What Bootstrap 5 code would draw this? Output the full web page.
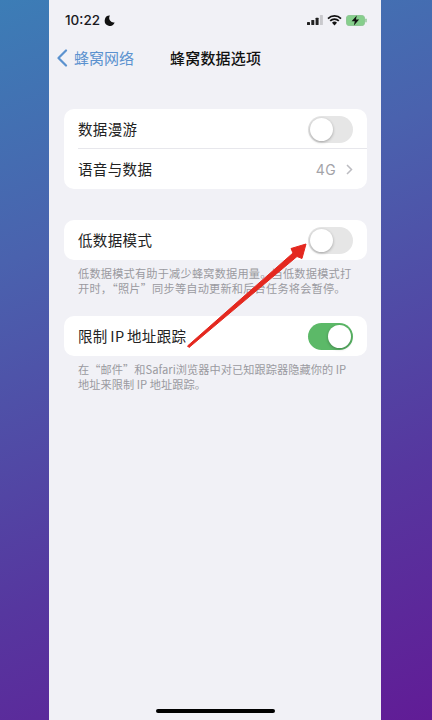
<!DOCTYPE html>
<html lang="zh">
<head>
<meta charset="utf-8">
<title>蜂窝数据选项</title>
<link href="https://cdn.jsdelivr.net/npm/bootstrap@5.3.0/dist/css/bootstrap.min.css" rel="stylesheet">
<style>
html,body{height:720px;overflow:hidden}
body{background:linear-gradient(160deg,#3c7db6 0%,#4a62ae 30%,#56379f 70%,#611c96 100%);font-family:"Noto Sans CJK SC","Liberation Sans",sans-serif;position:relative}
.phone-screen{width:332px;height:720px;margin-left:49px;background:#f1f1f6;padding:0 15px;position:relative}
.status-row{height:40px;padding:0 0 0 2px;margin:0 -1px;font-family:"Inter","Liberation Sans",sans-serif;font-size:13.5px;font-weight:500;color:#1a1a1e}
.nav-row{height:36px;position:relative;color:#111}
.back-link{color:#5b92cf;font-size:15px;position:absolute;left:-8px;top:0;height:36px;gap:6px}
.nav-title{font-size:15px;font-weight:500;position:absolute;left:106px;top:0;height:36px;letter-spacing:.2px;line-height:36px}
.set-card{background:#fff;border-radius:10px;width:303px;overflow:hidden}
.set-row{height:40px;padding:0 14px;font-size:14.5px;color:#222;letter-spacing:.35px}
.tight-gap{word-spacing:-1px}
.line-holder{padding-left:14px;height:0;position:relative}
.row-line{border-bottom:1px solid #e7e7ec;transform:translateY(-1px)}
.ios-toggle{width:45px;height:27px;border-radius:14px;background:#e6e6e6;padding:2px;display:flex}
.ios-toggle i{display:block;width:23px;height:23px;border-radius:50%;background:#fff;box-shadow:0 1px 3px rgba(0,0,0,.3)}
.ios-toggle.is-on{background:#5cb968;justify-content:flex-end}
.set-value{color:#a3a3a8;font-family:"Inter","Liberation Sans",sans-serif;font-size:14px;font-weight:400;gap:10px}
.set-note{font-size:11.2px;line-height:14.6px;color:#9a9aa0;padding:6px 14px 0;letter-spacing:.2px;width:303px}
.note-tight{letter-spacing:.05px}
.first-group{margin-top:33px}
.second-group{margin-top:31px}
.third-group{margin-top:21px}
.home-bar{position:absolute;left:107px;bottom:7px;width:119px;height:4px;border-radius:2px;background:#000}
.red-arrow{position:absolute;left:0;top:0;pointer-events:none}
</style>
</head>
<body>
<div class="phone-screen">
  <div class="status-row d-flex align-items-center justify-content-between">
    <div class="d-flex align-items-center gap-1">10:22
      <svg width="11" height="11" viewBox="0 0 12 12"><path d="M6.5 .6A5.6 5.6 0 1 0 11.6 8.2 5 5 0 0 1 6.5 .6Z" fill="#111"/></svg>
    </div>
    <div class="d-flex align-items-center" style="gap:4px">
      <svg width="16" height="10" viewBox="0 0 16 10"><rect x="0" y="7" width="3" height="3" rx=".6" fill="#222"/><rect x="4.3" y="5" width="3" height="5" rx=".6" fill="#222"/><rect x="8.6" y="2.7" width="3" height="7.3" rx=".6" fill="#222"/><rect x="12.9" y="0" width="3" height="10" rx=".6" fill="#c9c9cd"/></svg>
      <svg width="15" height="11" viewBox="0 0 15 11"><path d="M1 3.6a9.2 9.2 0 0 1 13 0M3.2 5.9a6 6 0 0 1 8.6 0" fill="none" stroke="#111" stroke-width="1.7"/><path d="M5 7.7a3.4 3.4 0 0 1 5 0L7.5 10.6Z" fill="#111"/></svg>
      <svg width="21" height="11" viewBox="0 0 21 11"><rect x=".5" y=".5" width="18" height="10" rx="2.6" fill="#86cf8c" stroke="#8fc795"/><rect x="19.3" y="3.6" width="1.4" height="3.8" rx=".7" fill="#8fc795"/><path d="M10.8 .4 5.6 6.3h3.2L7.9 10.6l5.2-6h-3.2Z" fill="#111"/></svg>
    </div>
  </div>
  <div class="nav-row">
    <div class="back-link d-flex align-items-center">
      <svg width="12" height="18" viewBox="0 0 12 18"><path d="M10 1.5 2.5 9l7.5 7.5" fill="none" stroke="#5b92cf" stroke-width="2.2" stroke-linecap="round" stroke-linejoin="round"/></svg>
      <span>蜂窝网络</span>
    </div>
    <div class="nav-title">蜂窝数据选项</div>
  </div>

  <div class="set-card first-group">
    <div class="set-row d-flex align-items-center justify-content-between">
      <span>数据漫游</span><div class="ios-toggle"><i></i></div>
    </div>
    <div class="line-holder"><div class="row-line"></div></div>
    <div class="set-row d-flex align-items-center justify-content-between">
      <span>语音与数据</span>
      <span class="set-value d-flex align-items-center">4G
        <svg width="7" height="11" viewBox="0 0 7 11"><path d="M1 1l4.5 4.5L1 10" fill="none" stroke="#bcbcc1" stroke-width="1.5"/></svg>
      </span>
    </div>
  </div>

  <div class="set-card second-group">
    <div class="set-row d-flex align-items-center justify-content-between">
      <span>低数据模式</span><div class="ios-toggle"><i></i></div>
    </div>
  </div>
  <div class="set-note">低数据模式有助于减少蜂窝数据用量。当低数据模式打开时，“照片”同步等自动更新和后台任务将会暂停。</div>

  <div class="set-card third-group">
    <div class="set-row d-flex align-items-center justify-content-between">
      <span class="tight-gap">限制 IP 地址跟踪</span><div class="ios-toggle is-on"><i></i></div>
    </div>
  </div>
  <div class="set-note note-tight">在“邮件”和Safari浏览器中对已知跟踪器隐藏你的 IP 地址来限制 IP 地址跟踪。</div>

  <div class="home-bar"></div>
</div>
<svg class="red-arrow" width="432" height="720" viewBox="0 0 432 720">
  <path d="M187.5 346 293 253 291 248.5 306 244 302 258.5 297 256.5 189 347.5Z" fill="#e4281f" stroke="#e4281f" stroke-width="1" stroke-linejoin="round"/>
</svg>
</body>
</html>
